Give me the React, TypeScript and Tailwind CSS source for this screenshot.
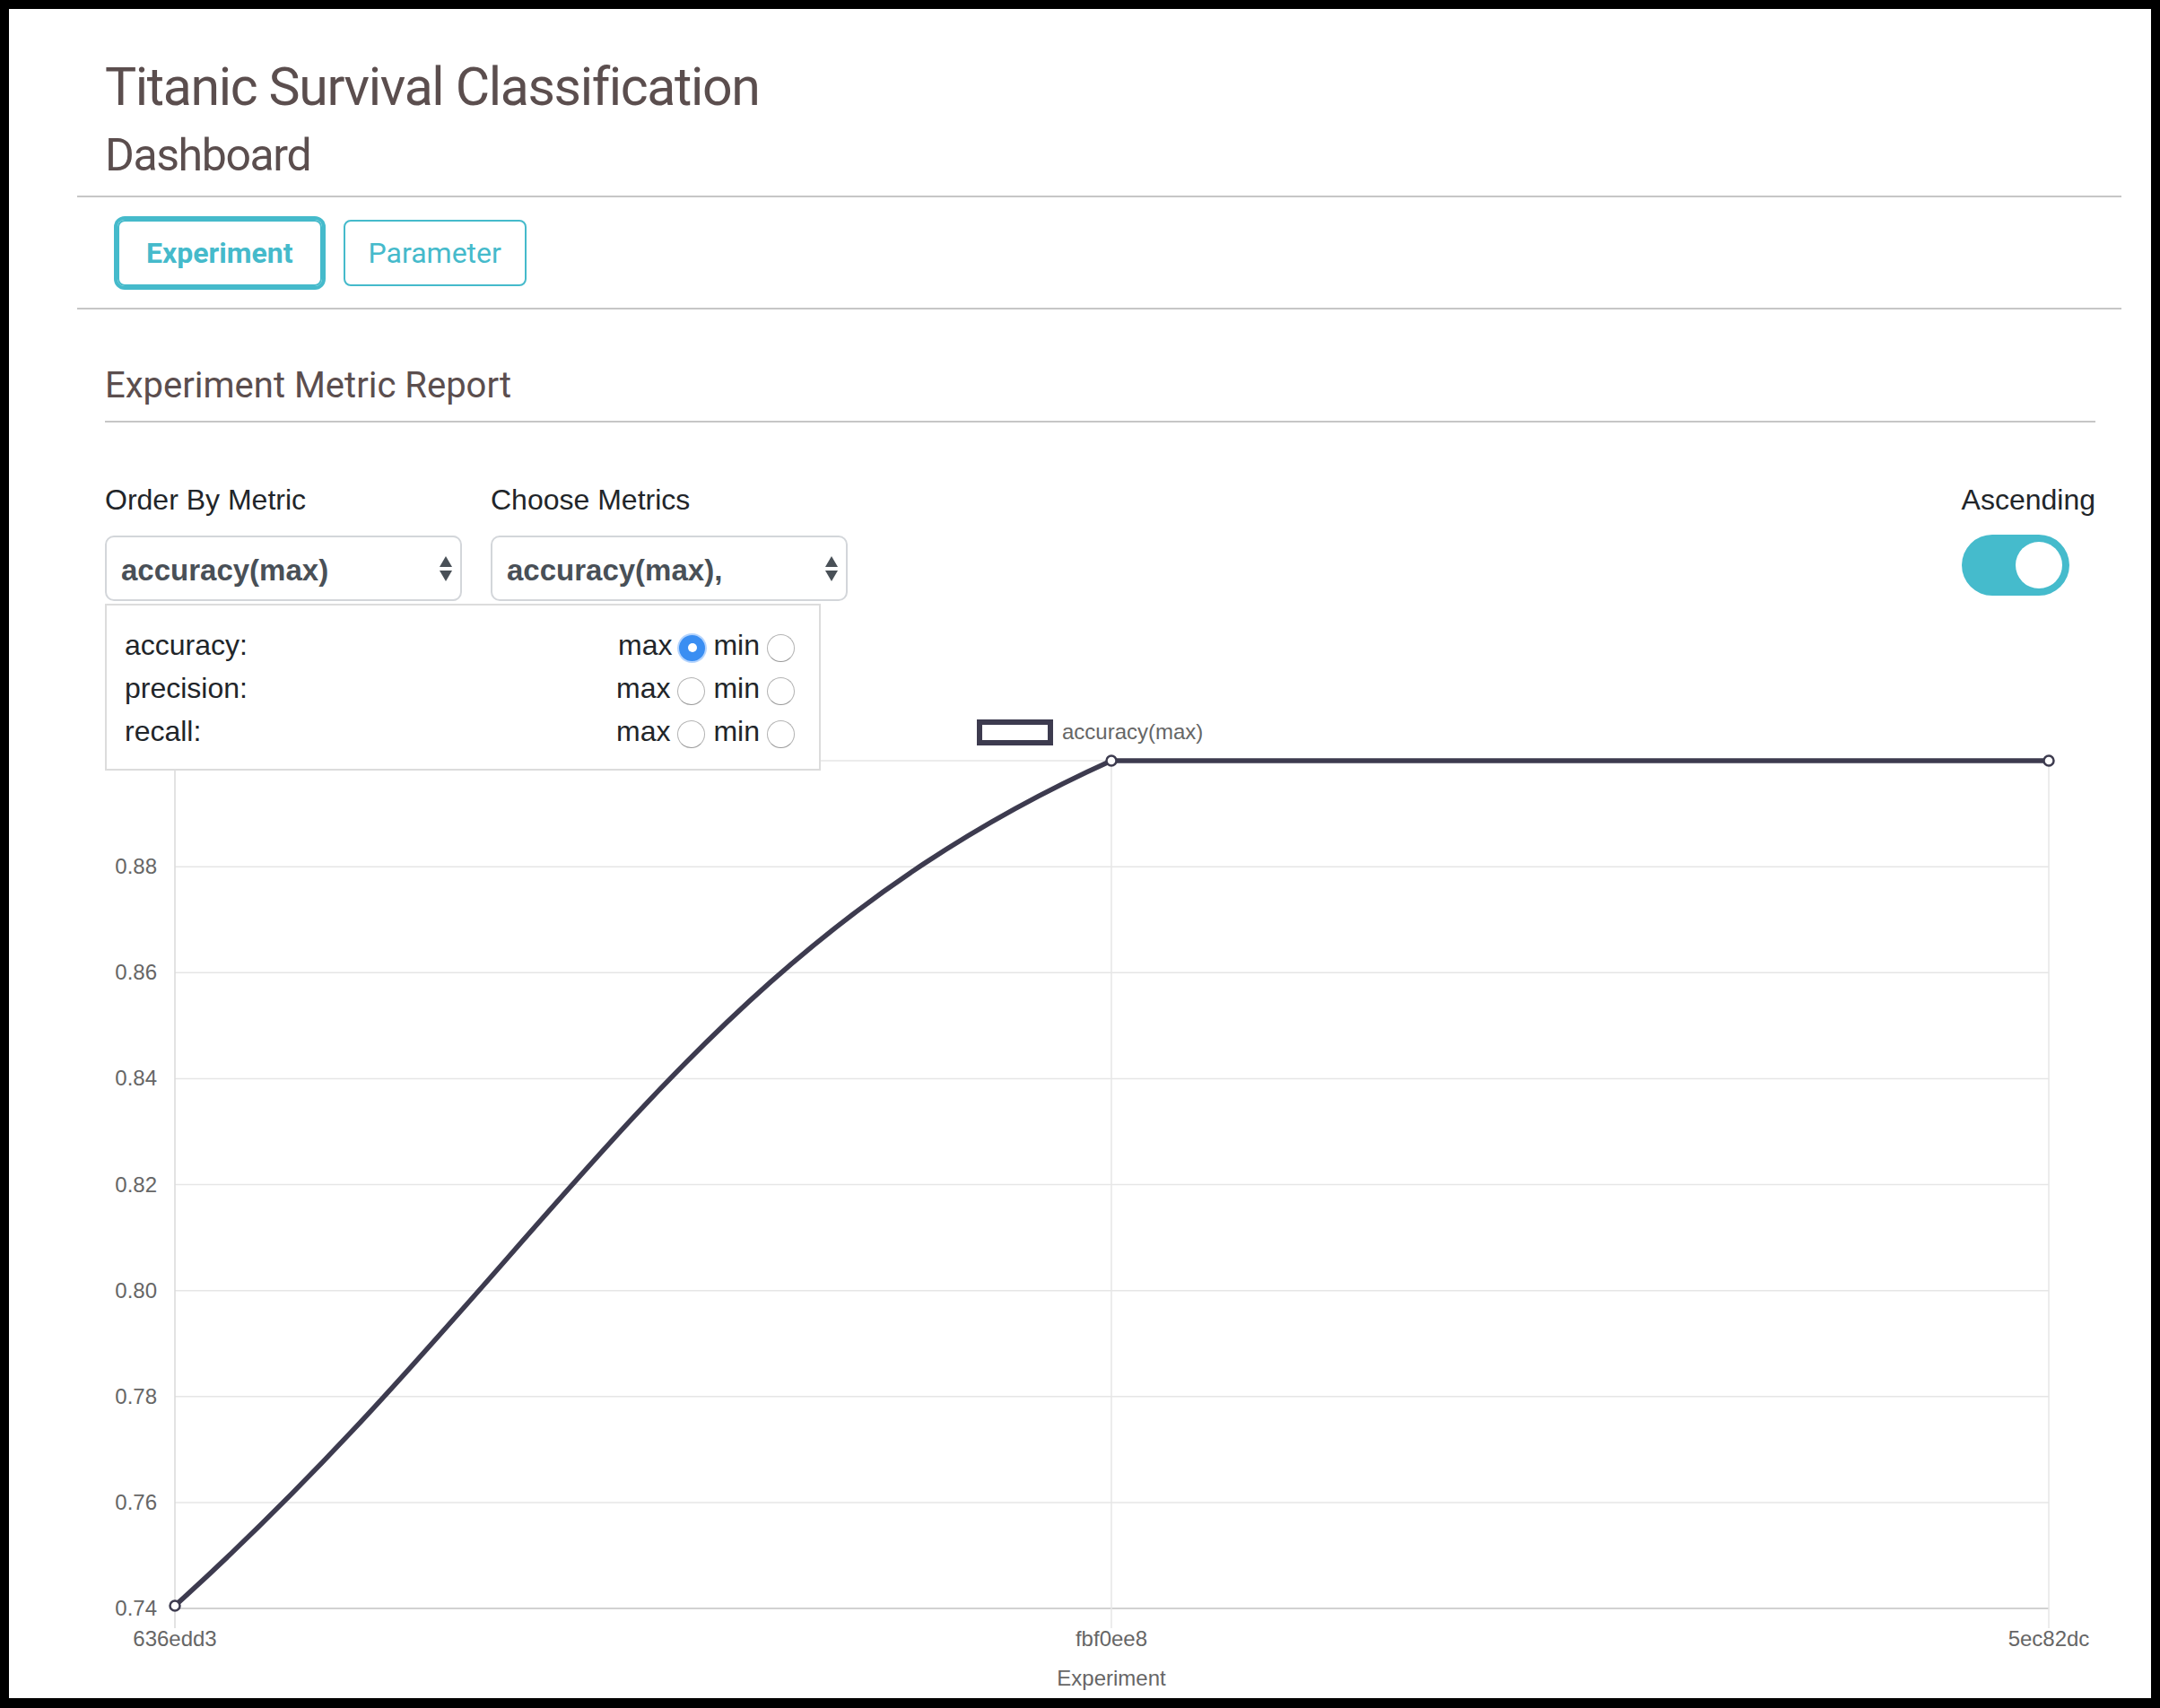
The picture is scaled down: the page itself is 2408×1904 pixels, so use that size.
import React from "react";

const teal = "#45bacb";
const lineColor = "#3d3b4f";
const chartFont = "'Liberation Sans', Arial, sans-serif";

const yTicks = ["0.90", "0.88", "0.86", "0.84", "0.82", "0.80", "0.78", "0.76", "0.74"];
const xTicks = [
  { label: "636edd3", x: 78 },
  { label: "fbf0ee8", x: 1122 },
  { label: "5ec82dc", x: 2167 },
];
const points = [
  { x: 78, y: 1010 },
  { x: 1122, y: 68 },
  { x: 2167, y: 68 },
];

const metrics = [
  { name: "accuracy:", choice: "max" },
  { name: "precision:", choice: "" },
  { name: "recall:", choice: "" },
];

function Radio({ checked }: { checked: boolean }) {
  if (checked) {
    return (
      <span className="flex h-[29px] w-[29px] translate-y-[3px] items-center justify-center rounded-full bg-[#3a8ef2] shadow-[0_0_0_2px_rgba(90,160,250,0.45)]">
        <span className="h-[10px] w-[10px] rounded-full bg-white" />
      </span>
    );
  }
  return (
    <span className="block h-[31px] w-[31px] translate-y-[3px] rounded-full border border-[#b3b3b3] border-b-[#9a9a9a] bg-white" />
  );
}

function SelectBox({ value }: { value: string }) {
  return (
    <div className="mt-[20px] flex h-[73px] w-[398px] items-center justify-between rounded-[10px] border-2 border-[#d3d6da] bg-white pl-[16px] pr-[9px]">
      <span className="pt-[5px] text-[33px] font-bold leading-[40px] text-[#495057]">{value}</span>
      <svg width="14" height="28" viewBox="0 0 14 28">
        <polygon points="7,0 14,12 0,12" fill="#495057" />
        <polygon points="0,16 14,16 7,28" fill="#495057" />
      </svg>
    </div>
  );
}

function MetricChart() {
  const [p0, p1, p2] = points;
  const path = `M ${p0.x} ${p0.y} C 495.6 633.2 642.6 284.2 ${p1.x} ${p1.y} L ${p2.x} ${p2.y}`;

  return (
    <svg className="mt-[110px] block" width="2219" height="1113" viewBox="0 0 2219 1113">
      {yTicks.map((t, i) => {
        const y = 68 + i * 118.125;
        const last = i === yTicks.length - 1;
        return (
          <g key={t}>
            <line
              x1={78}
              x2={2167}
              y1={y}
              y2={y}
              stroke={last ? "#d2d2d2" : "#e6e6e6"}
              strokeWidth={last ? 2 : 1.5}
            />
            <text x={58} y={y + 8} textAnchor="end" fontSize="24" fill="#666" fontFamily={chartFont}>
              {t}
            </text>
          </g>
        );
      })}
      {xTicks.map((t) => (
        <g key={t.label}>
          <line
            x1={t.x}
            x2={t.x}
            y1={68}
            y2={1035}
            stroke={t.x === 78 ? "#dadada" : "#e6e6e6"}
            strokeWidth={1.5}
          />
          <text x={t.x} y={1055} textAnchor="middle" fontSize="24" fill="#666" fontFamily={chartFont}>
            {t.label}
          </text>
        </g>
      ))}
      <text x={1122} y={1099} textAnchor="middle" fontSize="24" fill="#666" fontFamily={chartFont}>
        Experiment
      </text>

      {/* legend */}
      <rect x={975} y={25} width={79} height={23} fill="white" stroke={lineColor} strokeWidth={6} />
      <text x={1067} y={44} fontSize="24" fill="#666" fontFamily={chartFont}>
        accuracy(max)
      </text>

      <path d={path} fill="none" stroke={lineColor} strokeWidth={5.5} strokeLinecap="round" />
      {points.map((p) => (
        <circle key={p.x} cx={p.x} cy={p.y} r={5.5} fill="white" stroke={lineColor} strokeWidth={2.5} />
      ))}
    </svg>
  );
}

export default function App() {
  return (
    <div className="h-[1904px] w-[2408px] bg-black pb-[11px] pl-[10px] pr-[10px] pt-[10px]">
      <div className="h-full w-full overflow-hidden bg-white pt-[52px]">
        <div className="ml-[76px] w-[2279px]">
          <div className="px-[31px] font-['Roboto',sans-serif] text-[#5b4e4e]">
            <h1 className="text-[59px] font-normal leading-[70px] tracking-[-1.35px]">
              Titanic Survival Classification
            </h1>
            <h2 className="mt-[11px] text-[50px] font-normal leading-[60px] tracking-[-1.4px]">Dashboard</h2>
          </div>
          <div className="mt-[15px] h-[2px] bg-[#c6c6c6]" />

          <div className="mt-[25px] flex gap-[24px] pl-[45px] font-['Roboto',sans-serif]">
            <button
              className="h-[74px] rounded-[8px] border-2 px-[30px] text-[32px] font-bold shadow-[0_0_0_4px_#45bacb]"
              style={{ borderColor: teal, color: teal }}
            >
              Experiment
            </button>
            <button className="h-[74px] rounded-[8px] border-2 border-[#45bacb] px-[26px] text-[32px] font-normal text-[#45bacb]">
              Parameter
            </button>
          </div>
          <div className="mt-[24px] h-[2px] bg-[#c6c6c6]" />

          <div className="pl-[31px] pr-[29px]">
            <h3 className="mt-[61px] font-['Roboto',sans-serif] text-[40px] font-normal leading-[48px] text-[#5b4e4e]">
              Experiment Metric Report
            </h3>
            <div className="mt-[15px] h-[2px] bg-[#c6c6c6]" />

            <div className="relative mt-[66px] flex justify-between font-['Liberation_Sans',Arial,sans-serif] text-[#212529]">
              <div className="flex gap-[32px]">
                <div>
                  <div className="text-[32px] leading-[40px]">Order By Metric</div>
                  <SelectBox value="accuracy(max)" />
                </div>
                <div>
                  <div className="text-[32px] leading-[40px]">Choose Metrics</div>
                  <SelectBox value="accuracy(max)," />
                </div>
              </div>

              <div className="flex flex-col items-start">
                <div className="text-[32px] leading-[40px]">Ascending</div>
                <div className="mt-[19px] flex h-[68px] w-[120px] items-center justify-end rounded-full bg-[#45bbcc] pr-[8px]">
                  <span className="h-[52px] w-[52px] rounded-full bg-white" />
                </div>
              </div>

              <div className="absolute left-0 top-[136px] z-10 w-[798px] border-2 border-[#dcdcdc] bg-white pb-[18px] pl-[20px] pr-[27px] pt-[20px]">
                {metrics.map((m) => (
                  <div key={m.name} className="flex h-[48px] items-center justify-between text-[32px] leading-[48px]">
                    <span>{m.name}</span>
                    <div className="flex items-center">
                      <span>max</span>
                      <span className="ml-[8px]">
                        <Radio checked={m.choice === "max"} />
                      </span>
                      <span className="ml-[9px]">min</span>
                      <span className="ml-[8px]">
                        <Radio checked={m.choice === "min"} />
                      </span>
                    </div>
                  </div>
                ))}
              </div>
            </div>

            <MetricChart />
          </div>
        </div>
      </div>
    </div>
  );
}
